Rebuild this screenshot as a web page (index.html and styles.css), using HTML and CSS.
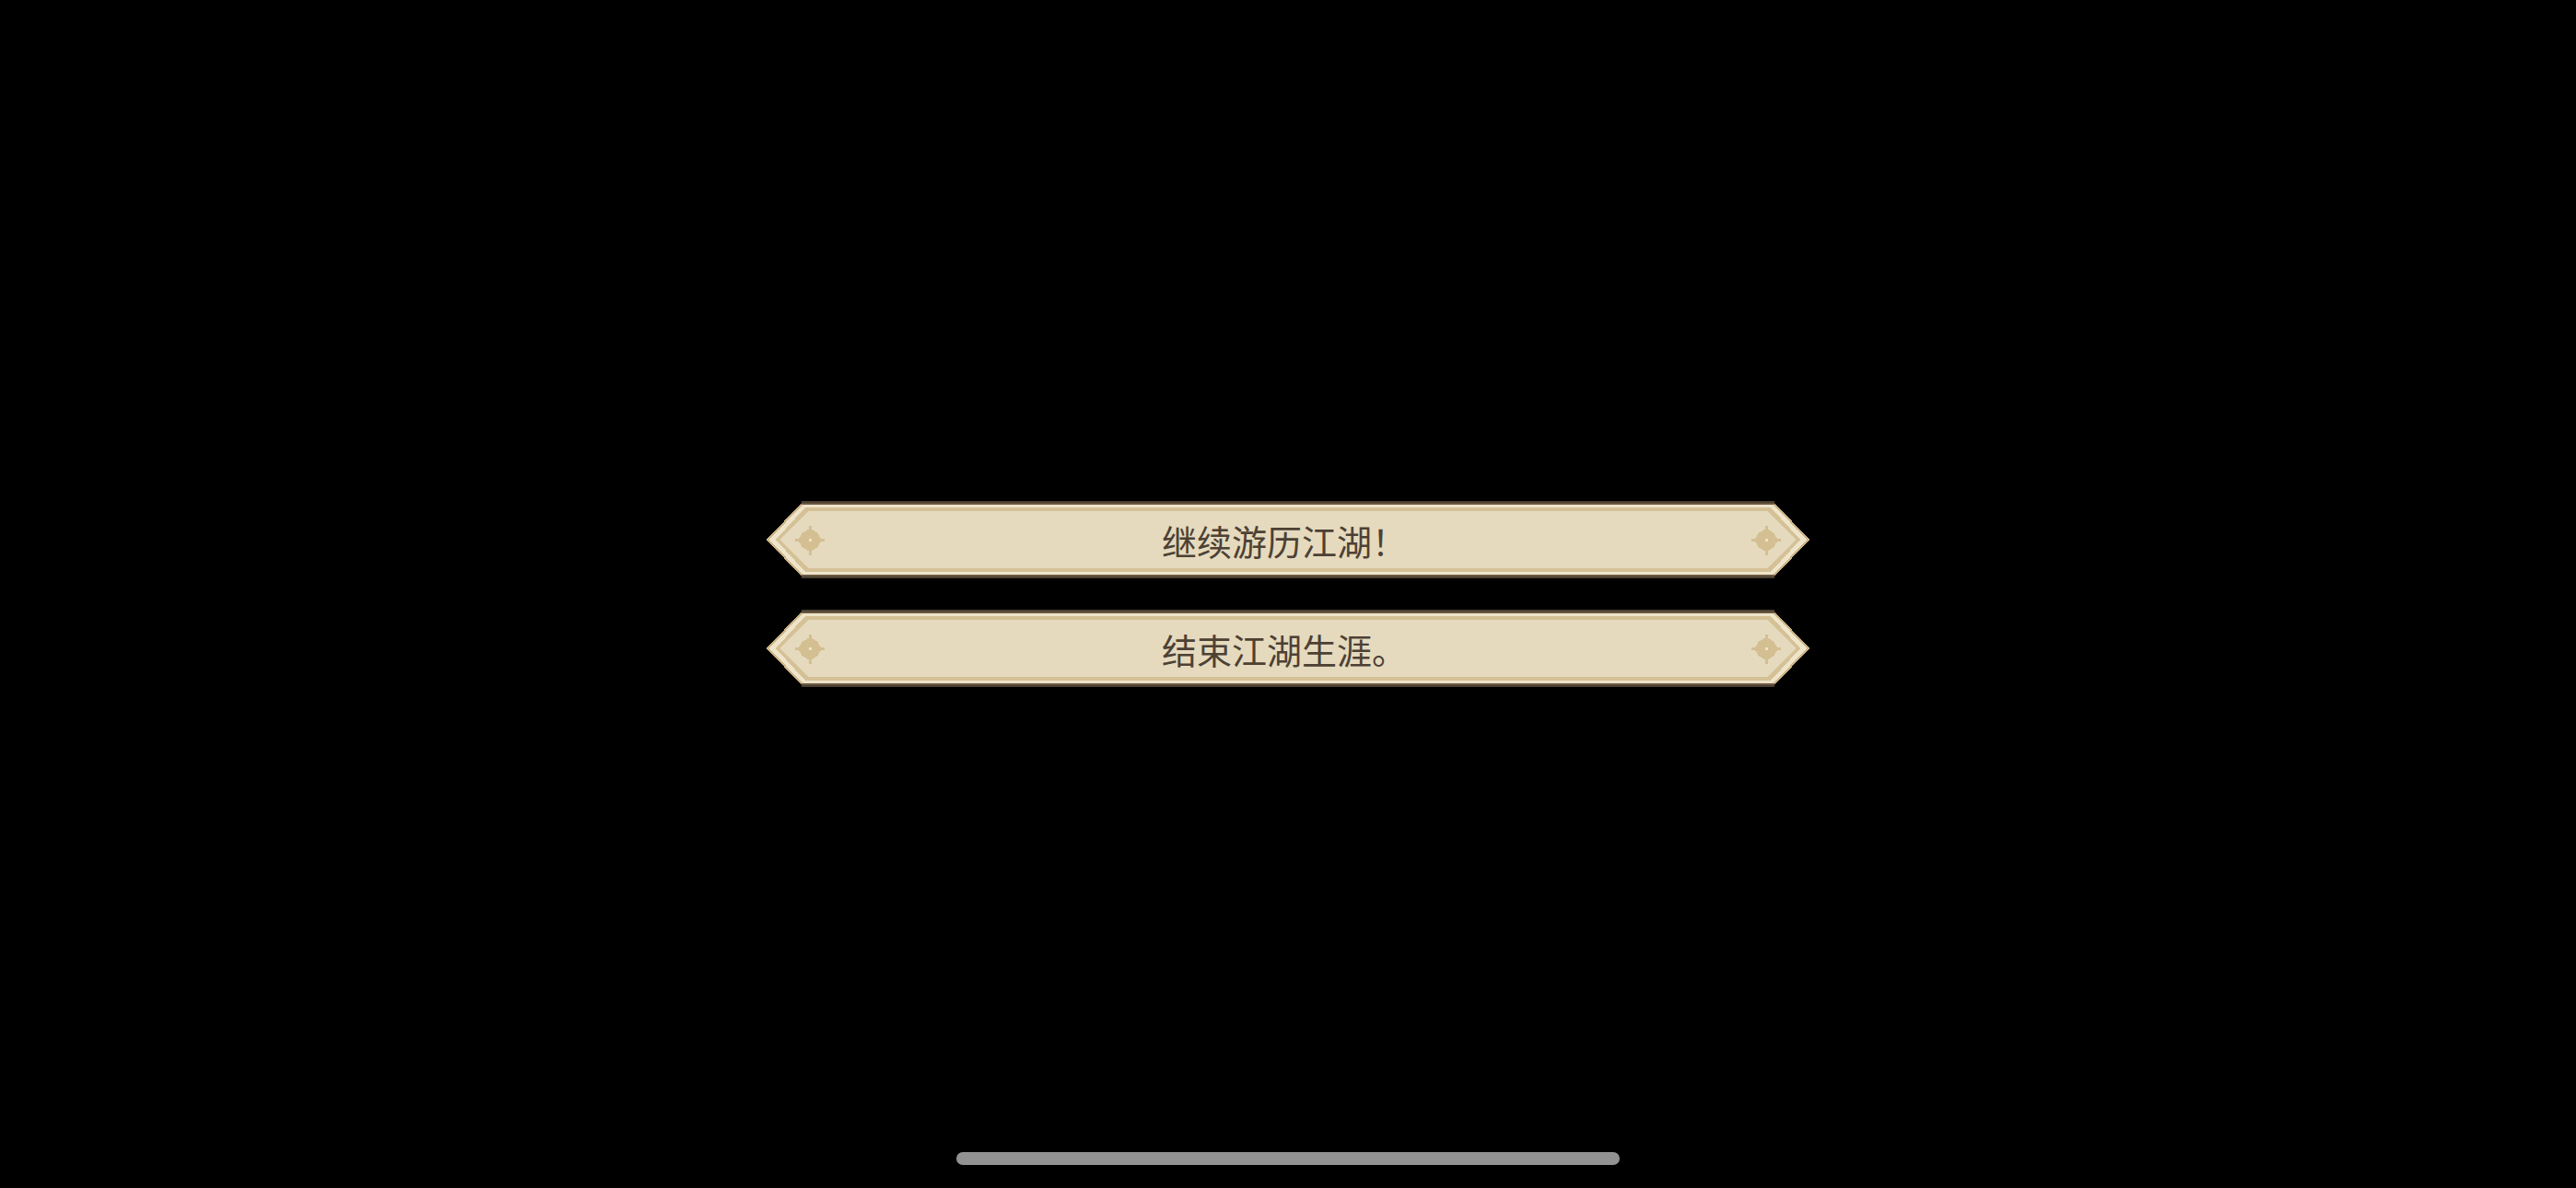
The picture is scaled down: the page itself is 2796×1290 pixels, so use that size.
FILE: index.html
```html
<!DOCTYPE html>
<html lang="zh-CN">
<head>
    <meta charset="UTF-8">
    <meta name="viewport" content="width=device-width, initial-scale=1.0">
    <title>江湖</title>
    <link rel="stylesheet" href="styles.css">
</head>
<body>
    <!-- 卷轴两端的花纹，只画一次 -->
    <svg class="defs" width="0" height="0">
        <defs>
            <symbol id="cap" viewBox="0 0 68 84" shape-rendering="crispEdges">
                <polygon points="38,2 68,2 68,82 38,82 0,42" fill="#cbb486"/>
                <polygon points="39,4 68,4 68,80 39,80 3,42" fill="#eee4ca"/>
                <polygon points="42,7 68,7 68,77 42,77 10,42" fill="#d5c196"/>
                <polygon points="45,11 68,11 68,73 45,73 15,42" fill="#e5dabe"/>
                <rect x="38" y="0" width="30" height="2" fill="#4b3f30"/>
                <rect x="38" y="2" width="30" height="2" fill="#6a5843"/>
                <rect x="38" y="80" width="30" height="2" fill="#6a5843"/>
                <rect x="38" y="82" width="30" height="2" fill="#4b3f30"/>
                <g transform="translate(47 42.5)">
                    <polygon fill="#d4bf92" points="-1.5,-16 1.5,-16 1.5,-12 4.5,-10 8,-8 10,-4.5 12,-1.5 16,-1.5 16,1.5 12,1.5 10,4.5 8,8 4.5,10 1.5,12 1.5,16 -1.5,16 -1.5,12 -4.5,10 -8,8 -10,4.5 -12,1.5 -16,1.5 -16,-1.5 -12,-1.5 -10,-4.5 -8,-8 -4.5,-10 -1.5,-12"/>
                    <rect x="-1.5" y="-1.5" width="3" height="3" fill="#ede2c7"/>
                </g>
            </symbol>
        </defs>
    </svg>

    <main class="screen">
        <div class="menu">
            <div class="choice">
                <svg class="cap"><use href="#cap"/></svg>
                <span class="choice-text">继续游历江湖！</span>
                <svg class="cap cap-right"><use href="#cap"/></svg>
            </div>
            <div class="choice">
                <svg class="cap"><use href="#cap"/></svg>
                <span class="choice-text">结束江湖生涯。</span>
                <svg class="cap cap-right"><use href="#cap"/></svg>
            </div>
        </div>

        <!-- 系统的 home 条 -->
        <div class="home-bar"></div>
    </main>
</body>
</html>
```

FILE: styles.css
```css
body {
    margin: 0;
    padding: 0;
    background-color: #000;
    font-family: "Noto Sans CJK SC", "Noto Sans", sans-serif;
    overflow: hidden;
}

.defs {
    position: absolute;
    width: 0;
    height: 0;
}

.screen {
    position: relative;
    height: 1290px;
    display: flex;
    align-items: center;
    justify-content: center;
}

.menu {
    width: 1132px;
    display: flex;
    flex-direction: column;
    gap: 34px;
}

.choice {
    display: flex;
    height: 84px;
    cursor: pointer;
}

.cap {
    display: block;
    flex: none;
    width: 68px;
    height: 84px;
}

.cap-right {
    transform: scaleX(-1);
}

.choice-text {
    flex: 1;
    display: flex;
    align-items: center;
    justify-content: center;
    padding-right: 8px;
    font-size: 38px;
    color: #4d4134;
    background-color: #e5dabe;
    /* 上下的边框线，一层压一层 */
    box-shadow:
        inset 0 2px 0 #4b3f30,
        inset 0 4px 0 #6a5843,
        inset 0 7px 0 #eee4ca,
        inset 0 11px 0 #d5c196,
        inset 0 -2px 0 #4b3f30,
        inset 0 -4px 0 #6a5843,
        inset 0 -7px 0 #eee4ca,
        inset 0 -11px 0 #d5c196;
}

.home-bar {
    position: absolute;
    left: 50%;
    bottom: 25px;
    width: 720px;
    height: 14px;
    margin-left: -360px;
    border-radius: 7px;
    background-color: #929292;
}
```
